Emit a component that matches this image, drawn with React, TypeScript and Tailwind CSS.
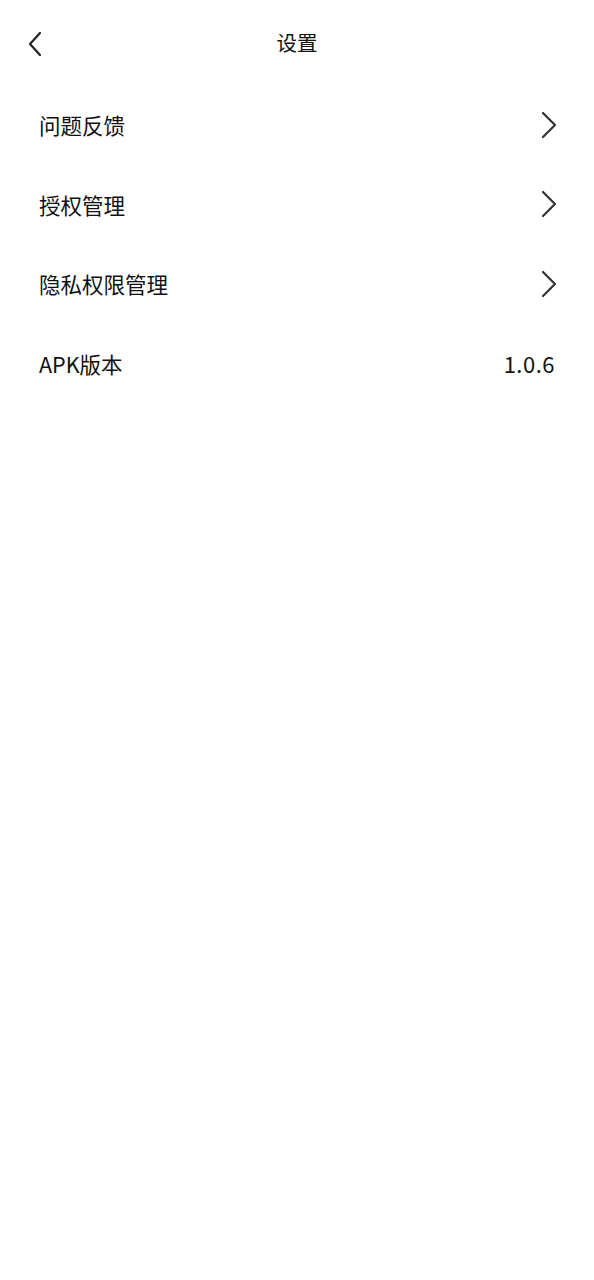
import React from "react";

const FONT = { fontFamily: '"Noto Sans CJK SC", "Noto Sans", sans-serif' };

function ChevronRight() {
  return (
    <svg width="16" height="28" viewBox="0 0 16 28" fill="none" className="shrink-0">
      <path d="M2 2 L14 14 L2 26" stroke="#333" strokeWidth="2.2" strokeLinecap="round" strokeLinejoin="round" />
    </svg>
  );
}

function ChevronLeft() {
  return (
    <svg width="16" height="26" viewBox="0 0 16 26" fill="none">
      <path d="M13 2 L3 13 L13 24" stroke="#222" strokeWidth="2.2" strokeLinecap="round" strokeLinejoin="round" />
    </svg>
  );
}

const rows: { label: string; value?: string }[] = [
  { label: "问题反馈" },
  { label: "授权管理" },
  { label: "隐私权限管理" },
  { label: "APK版本", value: "1.0.6" },
];

export default function App() {
  return (
    <div className="min-h-[1280px] w-full bg-white text-[#111]" style={FONT}>
      <div className="relative flex h-[85px] items-center justify-center">
        <button className="absolute left-[27px] top-[31px]">
          <ChevronLeft />
        </button>
        <h1 className="text-[20.5px] leading-none">设置</h1>
      </div>
      <div className="flex flex-col">
        {rows.map((r) => (
          <div key={r.label} className="flex h-[79.5px] items-center justify-between pl-[39px] pr-[37px]">
            <span className="text-[21.5px] leading-none">{r.label}</span>
            {r.value ? (
              <span className="mr-[2px] text-[22px] leading-none tracking-[0.5px]">{r.value}</span>
            ) : (
              <ChevronRight />
            )}
          </div>
        ))}
      </div>
    </div>
  );
}
